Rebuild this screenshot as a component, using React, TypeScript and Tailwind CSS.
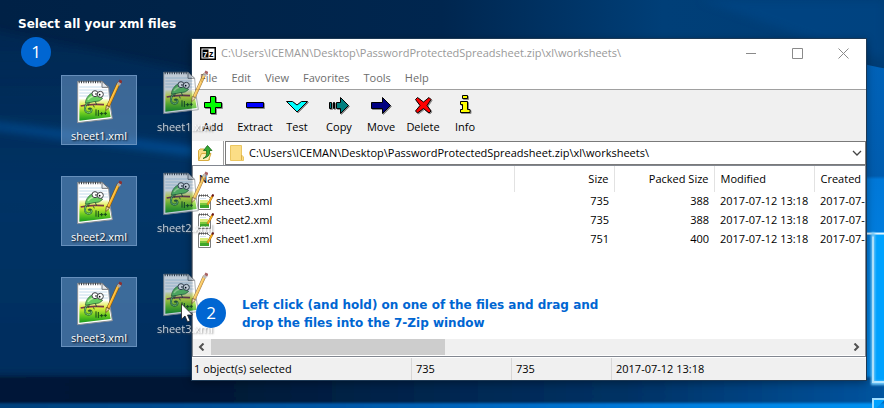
import type { ReactNode } from 'react'

const archivePath = 'C:\\Users\\ICEMAN\\Desktop\\PasswordProtectedSpreadsheet.zip\\xl\\worksheets\\'

const desktopFiles = ['sheet1.xml', 'sheet2.xml', 'sheet3.xml']

const archiveFiles = [
  { name: 'sheet3.xml', size: 735, packed: 388, modified: '2017-07-12 13:18', created: '2017-07-12 13:18' },
  { name: 'sheet2.xml', size: 735, packed: 388, modified: '2017-07-12 13:18', created: '2017-07-12 13:18' },
  { name: 'sheet1.xml', size: 751, packed: 400, modified: '2017-07-12 13:18', created: '2017-07-12 13:18' },
]

const menuItems = ['File', 'Edit', 'View', 'Favorites', 'Tools', 'Help']

function Wallpaper() {
  return (
    <svg className="absolute inset-0 h-full w-full" viewBox="0 0 884 408" preserveAspectRatio="none" aria-hidden="true">
      <defs>
        <linearGradient id="base" x1="0" y1="0" x2="1" y2="0">
          <stop offset="0" stopColor="#002146" />
          <stop offset="0.2" stopColor="#002348" />
          <stop offset="0.5" stopColor="#00264f" />
          <stop offset="0.75" stopColor="#003f78" />
          <stop offset="1" stopColor="#003d75" />
        </linearGradient>
        <linearGradient id="left" x1="0" y1="0" x2="0" y2="1">
          <stop offset="0" stopColor="#00356a" stopOpacity="0.3" />
          <stop offset="0.5" stopColor="#003568" stopOpacity="0.9" />
          <stop offset="1" stopColor="#002f5e" />
        </linearGradient>
        <linearGradient id="ray" x1="0" y1="0" x2="1" y2="0">
          <stop offset="0" stopColor="#0058a8" stopOpacity="0.6" />
          <stop offset="1" stopColor="#0058a8" stopOpacity="0.8" />
        </linearGradient>
        <linearGradient id="right" x1="0" y1="0" x2="0" y2="1">
          <stop offset="0" stopColor="#0062b8" />
          <stop offset="0.35" stopColor="#005cae" />
          <stop offset="0.36" stopColor="#0078d8" />
          <stop offset="1" stopColor="#0088ea" />
        </linearGradient>
        <linearGradient id="floor" x1="0" y1="0" x2="1" y2="0">
          <stop offset="0" stopColor="#001a38" />
          <stop offset="0.25" stopColor="#001835" />
          <stop offset="0.7" stopColor="#003265" />
          <stop offset="1" stopColor="#0058a6" />
        </linearGradient>
        <linearGradient id="lower" x1="0" y1="0" x2="1" y2="0">
          <stop offset="0" stopColor="#003f78" />
          <stop offset="0.4" stopColor="#0058a8" />
          <stop offset="0.7" stopColor="#0078d8" />
          <stop offset="1" stopColor="#0094f4" />
        </linearGradient>
        <filter id="soft" x="-10%" y="-50%" width="120%" height="200%">
          <feGaussianBlur stdDeviation="4" />
        </filter>
        <filter id="glow" x="-50%" y="-10%" width="200%" height="120%">
          <feGaussianBlur stdDeviation="1" />
        </filter>
      </defs>
      <rect width="884" height="408" fill="url(#base)" />
      <path d="M-30 25 L210 75 V374 H-30 Z" fill="url(#left)" filter="url(#soft)" />
      <path d="M-30 119 L210 149 V157 L-30 126 Z" fill="url(#ray)" filter="url(#soft)" />
      <path d="M700 0 C760 20 820 45 884 58 V0 Z" fill="#004a8c" opacity="0.5" filter="url(#soft)" />
      <path d="M840 60 C860 62 872 66 884 68 V390 H840 Z" fill="url(#right)" />
      <rect x="-30" y="376" width="944" height="34" fill="url(#floor)" filter="url(#glow)" />
      <rect x="-20" y="402" width="924" height="16" fill="url(#lower)" filter="url(#glow)" />
      <rect x="872" y="232" width="14" height="150" fill="#00a2ff" />
      <path d="M866 233 H884" stroke="#d8f2ff" strokeWidth="4" filter="url(#glow)" />
      <path d="M866 233 H884" stroke="#e4f6ff" strokeWidth="2" />
      <path d="M873 232 V382 H886" fill="none" stroke="#6ec8fa" strokeWidth="4" filter="url(#glow)" />
      <path d="M873 236 V381 H886" fill="none" stroke="#b4e6ff" strokeWidth="2" />
      <path d="M873 410 V398 H886" fill="#00a2ff" stroke="#a0deff" strokeWidth="2" />
    </svg>
  )
}

/* Notepad page with a chameleon on a branch and a pencil */
function SheetIcon() {
  return (
    <svg className="h-[46px] w-[46px]" viewBox="0 0 138 138" aria-hidden="true">
      <defs>
        <linearGradient id="grass" x1="0" y1="0" x2="0" y2="1">
          <stop offset="0" stopColor="#f6fbd0" />
          <stop offset="0.3" stopColor="#e0f03c" />
          <stop offset="0.65" stopColor="#6ccc20" />
          <stop offset="1" stopColor="#189a1e" />
        </linearGradient>
      </defs>
      <path d="M5 10 H78 L98 28 Q100 76 109 122 L5 134 Z" fill="#fff" stroke="#8a8f94" strokeWidth="3" />
      <path d="M10 27 H80 M10 36 H94 M10 45 H95 M10 54 H96" stroke="#c4dcec" strokeWidth="3" />
      <path d="M10 64 H97 Q99 92 104 117 L10 128 Z" fill="url(#grass)" />
      <path d="M78 10 V28 H98 Z" fill="#e4e8ec" stroke="#707478" strokeWidth="3" />
      <path d="M8 12 H76" stroke="#3c4248" strokeWidth="7" strokeDasharray="3 4" />
      <path d="M14 84 Q42 77 84 80" fill="none" stroke="#7a3a48" strokeWidth="5" />
      <path d="M56 68 Q36 66 29 82 Q22 102 37 104 Q49 103 46 94 Q42 89 37 94" fill="none" stroke="#2c5c30" strokeWidth="6" />
      <path d="M56 68 Q36 66 29 82 Q22 102 37 104 Q49 103 46 94" fill="none" stroke="#74d070" strokeWidth="3" />
      <path d="M28 75 Q30 56 46 46 Q58 42 66 52 L80 61 Q72 72 54 71 Q40 75 28 75 Z" fill="#66cc60" stroke="#2c5c30" strokeWidth="2" />
      <path d="M36 66 Q42 56 54 54" fill="none" stroke="#b4f09c" strokeWidth="4" />
      <path d="M40 72 L37 83 M58 70 L62 81 M52 82 L55 88" stroke="#2c5c30" strokeWidth="3" />
      <circle cx="57" cy="47" r="9" fill="#fff" stroke="#404448" strokeWidth="3" />
      <circle cx="73" cy="49" r="9" fill="#fff" stroke="#404448" strokeWidth="3" />
      <circle cx="60" cy="48" r="2.5" fill="#000" />
      <circle cx="71" cy="50" r="2.5" fill="#000" />
      <path d="M60 94 V113 M67 96 V114 M71 107 H82 M77 102 V112 M83 106 H93 M88 101 V111" fill="none" stroke="#15491a" strokeWidth="3" />
      <path d="M128 15 L96 85" stroke="#7a5010" strokeWidth="10" />
      <path d="M127 17 L97 83" stroke="#f6ad24" strokeWidth="7" />
      <path d="M126 17 L96 82" stroke="#ffdc70" strokeWidth="2" />
      <path d="M135 7 L131 15" stroke="#8c3030" strokeWidth="10" />
      <path d="M131 14 L127 21" stroke="#a8a8a8" strokeWidth="10" />
      <path d="M91 82 L101 87 L89 98 Z" fill="#f4d8a0" stroke="#4a3210" strokeWidth="2" />
    </svg>
  )
}

function SmallSheetIcon() {
  return (
    <svg className="h-4 w-4 shrink-0" viewBox="0 0 16 16" aria-hidden="true">
      <path d="M.5 1.5 H9.5 L12.5 4.5 V15.5 H.5 Z" fill="#fff" stroke="#7c7c7c" />
      <path d="M1 1.5 H10" stroke="#555" strokeWidth="2" strokeDasharray="1 1" />
      <path d="M2 4.5 H8" stroke="#d4e2ee" />
      <rect x="2" y="6" width="8" height="3" fill="#dcec7a" />
      <rect x="2" y="9" width="9" height="2" fill="#7cc83c" />
      <rect x="2" y="11" width="9" height="3" fill="#3fa52a" />
      <path d="M14.5 2 L9.5 11" stroke="#9a6414" strokeWidth="2.2" />
      <path d="M14.3 2.4 L9.7 10.6" stroke="#f8b020" strokeWidth="1.5" />
      <path d="M15.4 .4 L14.2 2.6" stroke="#6a1414" strokeWidth="2" />
    </svg>
  )
}

/* Flat 24x20 drawing with a one pixel grey drop shadow */
function ToolIcon({ d, fill }: { d: string; fill: string }) {
  return (
    <svg className="h-5 w-6" viewBox="0 0 24 20" aria-hidden="true">
      <path d={d} transform="translate(1 1)" fill="#8c8c8c" stroke="#8c8c8c" />
      <path d={d} fill={fill} stroke="#000" />
    </svg>
  )
}

const tools = [
  { label: 'Add', fill: '#00ff00', d: 'M9.5 1.5H14.5V7.5H20.5V12.5H14.5V18.5H9.5V12.5H3.5V7.5H9.5Z' },
  { label: 'Extract', fill: '#0000ff', d: 'M3.5 7.5H20.5V12.5H3.5Z' },
  { label: 'Test', fill: '#00ffff', d: 'M1.5 6.5H7.5L12 10L16.5 6.5H22.5L12 17Z' },
  { label: 'Copy', fill: '#008080', d: 'M2.5 7.5H4.5V13.5H2.5ZM6.5 7.5H7.5V13.5H6.5ZM9.5 7.5H13.5V2.5L21.5 10.5L13.5 18.5V13.5H9.5Z' },
  { label: 'Move', fill: '#000080', d: 'M2.5 7.5H13.5V2.5L21.5 10.5L13.5 18.5V13.5H2.5Z' },
  { label: 'Delete', fill: '#ff0000', d: 'M4.5 4.5L6.5 2.5L12.5 7L18 2.5L20 4.5L16 10.5L20 16L18 18L12.5 13.5L6.5 18L4.5 16L9 10.5Z' },
  { label: 'Info', fill: '#ffff00', d: 'M9.5 .5H14.5V3.5H9.5ZM7.5 6.5H14.5V14.5H17V17.5H7.5V14.5H9.5V9.5H7.5Z' },
]

function FileTile({ name, ghost }: { name: string; ghost?: boolean }) {
  return (
    <button
      className={
        ghost
          ? 'flex h-[70px] w-[76px] flex-col items-center gap-1 border border-transparent pt-0.5 text-white opacity-75 [text-shadow:1px_1px_2px_#555]'
          : 'flex h-[70px] w-[76px] flex-col items-center gap-1 border border-[#7199c4]/80 bg-[#78a4d4]/50 pt-0.5 text-white [text-shadow:1px_1px_2px_#000]'
      }
    >
      <SheetIcon />
      <span className="leading-4">{name}</span>
    </button>
  )
}

function StepBadge({ children }: { children: ReactNode }) {
  return (
    <span className="flex h-[30px] w-[30px] items-center justify-center rounded-full bg-[#0066d2] text-[17px] text-white">
      {children}
    </span>
  )
}

function TitleBar() {
  return (
    <div className="flex h-[29px] items-center pl-2">
      <svg className="mr-[5px] h-[13px] w-4" viewBox="0 0 16 13" aria-hidden="true">
        <rect x=".75" y=".75" width="14.5" height="11.5" fill="#fff" stroke="#000" strokeWidth="1.5" />
        <rect x="2.5" y="2.5" width="6" height="8" fill="#000" />
        <text x="3" y="9.5" fill="#fff" fontSize="8" fontWeight="700" fontFamily="Liberation Sans, sans-serif">7</text>
        <text x="9" y="10" fill="#000" fontSize="9" fontWeight="700" fontFamily="Liberation Sans, sans-serif">z</text>
      </svg>
      <h1 className="flex-1 truncate text-[#999]">{archivePath}</h1>
      <div className="flex self-stretch text-[#8a8a8a]">
        <button aria-label="Minimize" className="flex w-[46px] items-center justify-center">
          <svg className="h-[11px] w-[11px]" viewBox="0 0 11 11"><path d="M0 5.5H10" stroke="currentColor" /></svg>
        </button>
        <button aria-label="Maximize" className="flex w-[46px] items-center justify-center">
          <svg className="h-[11px] w-[11px]" viewBox="0 0 11 11"><path d="M.5 .5H10.5V10.5H.5Z" fill="none" stroke="currentColor" /></svg>
        </button>
        <button aria-label="Close" className="flex w-[46px] items-center justify-center">
          <svg className="h-[11px] w-[11px]" viewBox="0 0 11 11"><path d="M.5 .5L10.5 10.5M10.5 .5L.5 10.5" stroke="currentColor" /></svg>
        </button>
      </div>
    </div>
  )
}

function AddressBar() {
  return (
    <div className="flex h-6 bg-white">
      <button aria-label="Up one level" className="flex w-8 items-center border-r border-[#a0a0a0] pl-[5px]">
        <svg className="h-[18px] w-[18px]" viewBox="0 0 18 18" aria-hidden="true">
          <path d="M1.5 16V6.5L3 5H7L8.5 6.5H12.5V16Z" fill="#f8dc84" stroke="#d8ac40" />
          <path d="M1.5 16.5L4.5 9.5H14L11.5 16.5Z" fill="#ffefb4" stroke="#d8ac40" />
          <path d="M6 14.5Q10.5 13 9.5 6.5H6.5L10.5 1.5L15 6.5H12.5Q14 12.5 6 14.5Z" fill="#35a835" stroke="#176617" strokeWidth=".8" />
        </svg>
      </button>
      <div className="ml-px flex flex-1 items-center border border-[#7a7a7a] pl-1">
        <svg className="mr-[5px] h-4 w-3.5" viewBox="0 0 14 16" aria-hidden="true">
          <path d="M.5 .5H11.5V10L13.5 12V15.5H.5Z" fill="#fbdd86" stroke="#ebc660" />
          <path d="M11.5 10V15" stroke="#dcb04c" />
        </svg>
        <input aria-label="Path" className="min-w-0 flex-1 bg-transparent text-black outline-none" defaultValue={archivePath} />
        <button aria-label="Show path history" className="flex w-4 items-center justify-center">
          <svg className="h-2 w-2.5" viewBox="0 0 10 8"><path d="M1 2L5 6L9 2" fill="none" stroke="#444" strokeWidth="1.3" /></svg>
        </button>
      </div>
    </div>
  )
}

function FileList() {
  return (
    <div className="flex flex-1 flex-col border border-[#828790] bg-white pb-px">
      <div className="min-h-[173px] flex-1 overflow-hidden">
        <table className="w-full table-fixed border-collapse whitespace-nowrap">
          <colgroup>
            <col className="w-[321px]" />
            <col className="w-[100px]" />
            <col className="w-[100px]" />
            <col className="w-[100px]" />
            <col />
          </colgroup>
          <thead>
            <tr className="h-[26px] text-left">
              <th className="border-r border-[#e2e2e2] p-0 pl-1.5 font-normal">Name</th>
              <th className="border-r border-[#e2e2e2] p-0 pr-[5px] text-right font-normal">Size</th>
              <th className="border-r border-[#e2e2e2] p-0 pr-[5px] text-right font-normal">Packed Size</th>
              <th className="border-r border-[#e2e2e2] p-0 pl-1.5 font-normal">Modified</th>
              <th className="overflow-hidden p-0 pl-1.5 font-normal">Created</th>
            </tr>
          </thead>
          <tbody>
            {archiveFiles.map((file) => (
              <tr key={file.name} className="h-[19px]">
                <td className="p-0 pl-[5px]">
                  <span className="flex items-center gap-0.5">
                    <SmallSheetIcon />
                    {file.name}
                  </span>
                </td>
                <td className="p-0 pr-[5px] text-right">{file.size}</td>
                <td className="p-0 pr-[5px] text-right">{file.packed}</td>
                <td className="p-0 pl-1.5">{file.modified}</td>
                <td className="overflow-hidden p-0 pl-1.5">{file.created}</td>
              </tr>
            ))}
          </tbody>
        </table>
      </div>
      <div className="flex h-4 bg-[#f0f0f0]">
        <button aria-label="Scroll left" className="flex w-[18px] items-center justify-center">
          <svg className="h-2 w-2" viewBox="0 0 8 8"><path d="M5.5 .5L2 4L5.5 7.5" fill="none" stroke="#505050" strokeWidth="2" /></svg>
        </button>
        <div className="flex-1">
          <div className="h-full w-[234px] bg-[#cdcdcd]" />
        </div>
        <button aria-label="Scroll right" className="flex w-[18px] items-center justify-center">
          <svg className="h-2 w-2" viewBox="0 0 8 8"><path d="M2.5 .5L6 4L2.5 7.5" fill="none" stroke="#505050" strokeWidth="2" /></svg>
        </button>
      </div>
    </div>
  )
}

function ArchiveWindow() {
  return (
    <section className="relative flex min-w-0 flex-1 flex-col border border-[#1c3854] bg-white shadow-[0_2px_8px_rgba(0,0,0,0.35)]">
      <TitleBar />
      <nav className="flex h-[21px] pl-px text-[#6d6d6d]">
        {menuItems.map((item) => (
          <button key={item} className="px-[7px]">{item}</button>
        ))}
      </nav>
      <div className="flex h-[52px] border-t border-[#a0a0a0] bg-[#f0f0f0] pt-[5px]">
        {tools.map((tool) => (
          <button key={tool.label} className="flex w-[42px] flex-col items-center gap-1">
            <ToolIcon d={tool.d} fill={tool.fill} />
            <span className="leading-4">{tool.label}</span>
          </button>
        ))}
      </div>
      <AddressBar />
      <FileList />
      <footer className="flex h-[23px] border-t border-white bg-[#f0f0f0] leading-[22px]">
        <span className="w-[220px] border-r border-[#d7d7d7] pl-0.5">1 object(s) selected</span>
        <span className="w-[100px] border-r border-[#d7d7d7] pl-1">735</span>
        <span className="w-[100px] border-r border-[#d7d7d7] pl-1">735</span>
        <span className="pl-1">2017-07-12 13:18</span>
      </footer>
    </section>
  )
}

export default function App() {
  return (
    <main className="relative flex min-h-screen overflow-hidden bg-[#002850] pt-[38px] pr-[17px] pb-7 pl-[191px] font-['Open_Sans','Liberation_Sans',sans-serif] text-[11px] text-black">
      <Wallpaper />
      <ArchiveWindow />

      <h2 className="absolute top-[15px] left-[18px] font-['DejaVu_Sans',sans-serif] text-[12px] leading-[18px] font-bold text-white">Select all your xml files</h2>
      <div className="absolute top-[37px] left-[21px]">
        <StepBadge>1</StepBadge>
      </div>
      <div className="absolute top-[75px] left-[61px] flex flex-col gap-[31px]">
        {desktopFiles.map((name) => (
          <FileTile key={name} name={name} />
        ))}
      </div>

      {/* Copies that follow the pointer while dragging */}
      <div className="pointer-events-none absolute top-[66px] left-[147px] flex flex-col gap-[31px]">
        {desktopFiles.map((name) => (
          <FileTile key={name} name={name} ghost />
        ))}
      </div>
      <svg className="absolute top-[303px] left-[181px] h-5 w-3" viewBox="0 0 12 20" aria-hidden="true">
        <path d="M.5 .8V16.2L4 13L6.5 18.8L9 17.8L6.5 12H11.5Z" fill="#fff" stroke="#222" strokeWidth=".8" />
      </svg>
      <div className="absolute top-[298px] left-[196px]">
        <StepBadge>2</StepBadge>
      </div>
      <p className="absolute top-[296px] left-[242px] font-['DejaVu_Sans',sans-serif] text-[12px] leading-[18px] font-bold text-[#0066d2]">
        Left click (and hold) on one of the files and drag and
        <br />
        drop the files into the 7-Zip window
      </p>
    </main>
  )
}
